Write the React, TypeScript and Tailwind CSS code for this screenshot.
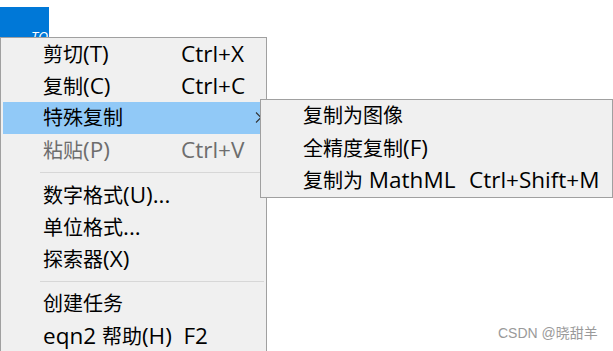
import React from "react";

const FONT = { fontFamily: '"Open Sans", "Noto Sans CJK SC", sans-serif' };

function Mixed({ text }: { text: string }) {
  const parts = text.split(/([\u3000-\u9fff\uff00-\uffef]+)/).filter((p) => p.length > 0);
  return (
    <>
      {parts.map((p, i) =>
        /[\u3000-\u9fff\uff00-\uffef]/.test(p) ? (
          <span key={i} className="text-[20px]">{p}</span>
        ) : (
          <span key={i} className="text-[22.5px]">{p}</span>
        )
      )}
    </>
  );
}

type Item =
  | { type: "item"; label: string; shortcut?: string; disabled?: boolean; active?: boolean; sub?: boolean }
  | { type: "sep" };

const mainItems: Item[] = [
  { type: "item", label: "剪切(T)", shortcut: "Ctrl+X" },
  { type: "item", label: "复制(C)", shortcut: "Ctrl+C" },
  { type: "item", label: "特殊复制", active: true, sub: true },
  { type: "item", label: "粘贴(P)", shortcut: "Ctrl+V", disabled: true },
  { type: "sep" },
  { type: "item", label: "数字格式(U)..." },
  { type: "item", label: "单位格式..." },
  { type: "item", label: "探索器(X)" },
  { type: "sep" },
  { type: "item", label: "创建任务" },
  { type: "item", label: "eqn2 帮助(H)  F2" },
];

const subItems: { label: string; shortcut?: string }[] = [
  { label: "复制为图像" },
  { label: "全精度复制(F)" },
  { label: "复制为 MathML", shortcut: "Ctrl+Shift+M" },
];

function Chevron() {
  return (
    <svg width="7" height="11" viewBox="0 0 7 11" className="absolute right-[2px] top-[10px]">
      <path d="M1 0.5 L6 5.5 L1 10.5" fill="none" stroke="#333" strokeWidth="1.1" />
    </svg>
  );
}

export default function App() {
  return (
    <div className="relative w-[613px] h-[351px] overflow-hidden bg-white" style={FONT}>
      {/* blue title block */}
      <div className="absolute left-0 top-[7px] w-[49px] h-[30px] bg-[#0078d7]" />
      <div className="absolute left-[31px] top-[30px] text-[14px] italic text-white leading-none">TQ</div>

      {/* main context menu */}
      <div className="absolute left-0 top-[37px] w-[267px] h-[330px] border border-[#a0a0a0] bg-[#f0f0f0] px-[2px] leading-none">
        {mainItems.map((it, i) =>
          it.type === "sep" ? (
            <div key={i} className="h-[13px] flex items-center pl-[37px]">
              <div className="h-px w-full bg-[#d7d7d7]" />
            </div>
          ) : (
            <div
              key={i}
              className={`relative h-[32px] flex items-center pl-[40px] ${it.active ? "bg-[#91c9f7]" : ""} ${
                it.disabled ? "text-[#6d6d6d]" : "text-black"
              }`}
            >
              <span className="w-[138px] whitespace-pre">
                <Mixed text={it.label} />
              </span>
              {it.shortcut && (
                <span className="whitespace-pre">
                  <Mixed text={it.shortcut} />
                </span>
              )}
              {it.sub && <Chevron />}
            </div>
          )
        )}
      </div>

      {/* submenu */}
      <div className="absolute left-[260px] top-[99px] w-[353px] h-[99px] border border-[#a0a0a0] bg-[#f0f0f0] px-[2px] leading-none text-black">
        {subItems.map((it, i) => (
          <div key={i} className="h-[32px] flex items-center pl-[40px]">
            <span className="w-[166px] whitespace-pre">
              <Mixed text={it.label} />
            </span>
            {it.shortcut && (
              <span className="whitespace-pre">
                <Mixed text={it.shortcut} />
              </span>
            )}
          </div>
        ))}
      </div>

      {/* watermark */}
      <div
        className="absolute left-[498px] top-[326px] text-[14px] text-[#9a9a9a] leading-none"
        style={{ fontFamily: '"Liberation Sans", "Noto Sans CJK SC", sans-serif' }}
      >
        CSDN @晓甜羊
      </div>
    </div>
  );
}
